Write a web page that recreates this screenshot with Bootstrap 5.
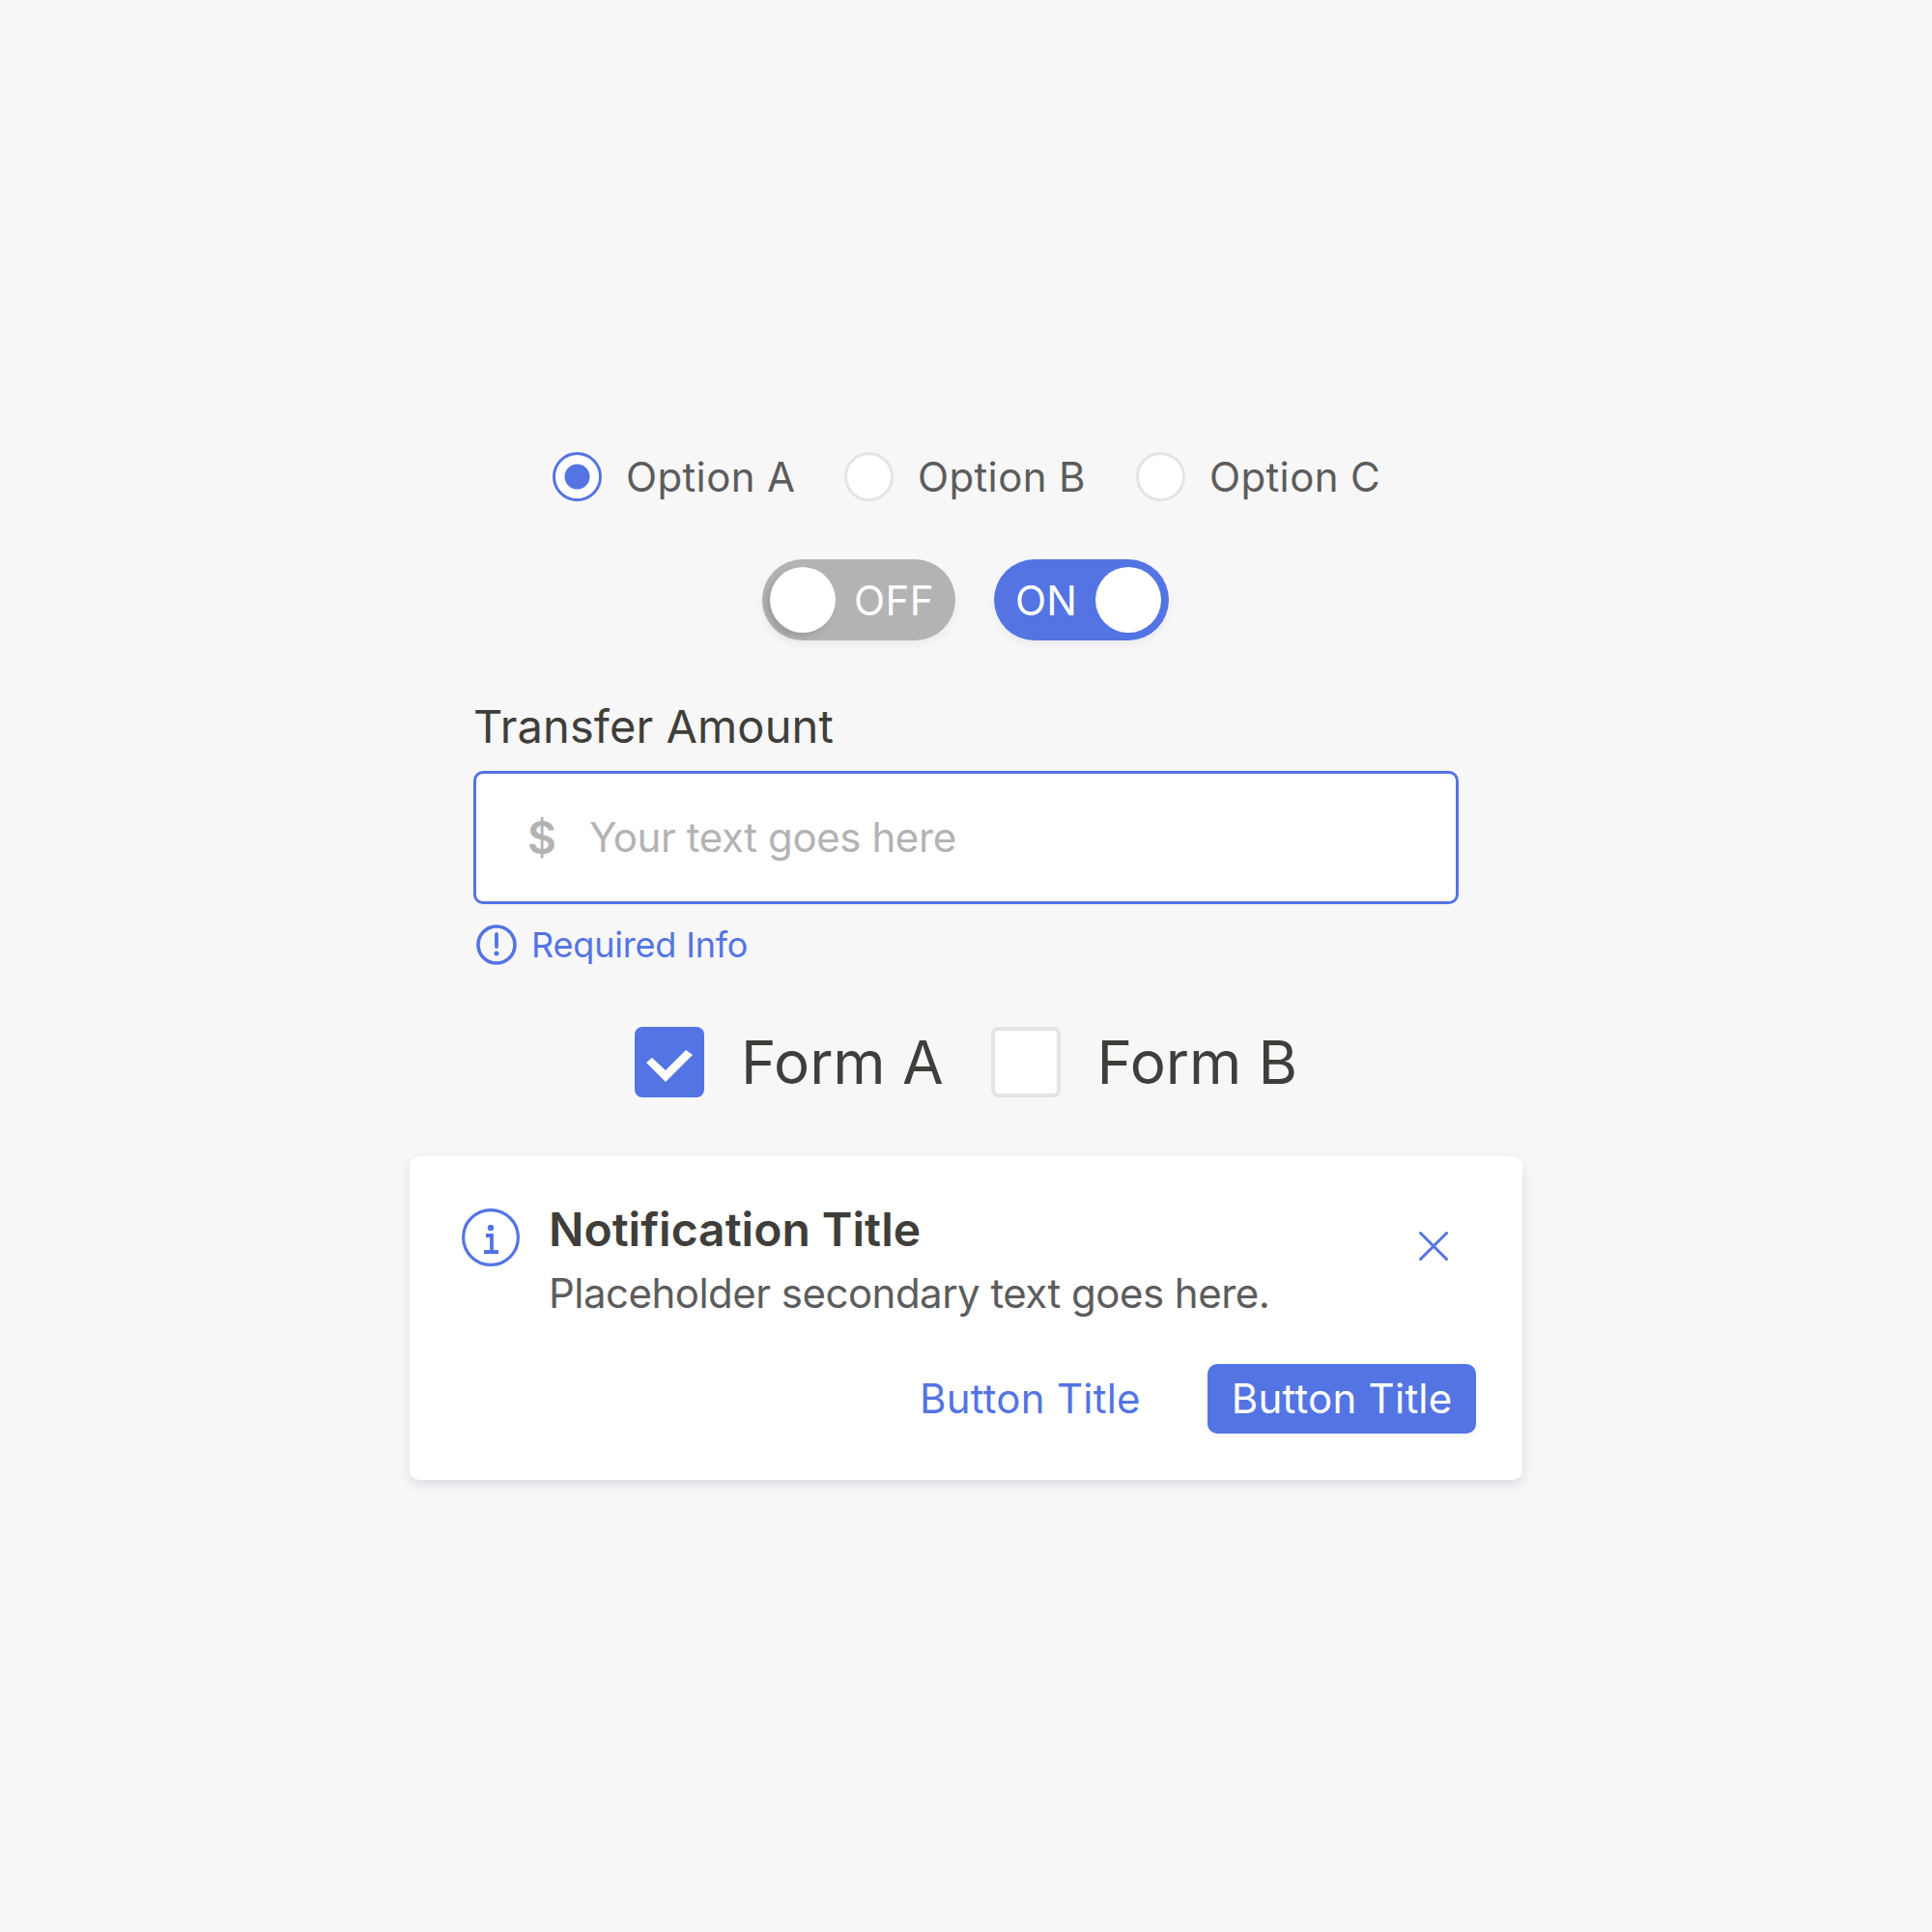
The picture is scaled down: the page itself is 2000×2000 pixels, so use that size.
<!doctype html>
<html lang="en">
<head>
<meta charset="utf-8">
<title>Form controls</title>
<link href="https://cdn.jsdelivr.net/npm/bootstrap@5.3.0/dist/css/bootstrap.min.css" rel="stylesheet">
<style>
:root{--blu:#5474e4;--ink:#403e3a;--sec:#5c5c5c;--mute:#b3b3b3;--line:#e3e4e8}
body{background:#f7f7f8;font-family:Inter,"Liberation Sans",sans-serif;color:var(--ink)}
.stage{width:1152px;min-height:100vh}
.radio-row{gap:50px;height:51px;margin-bottom:60px}
.form-check-input.pick{width:51px;height:51px;margin:0;background:#fff;border:3px solid var(--line);box-shadow:none}
.form-check-input.pick:checked{border-color:var(--blu);background:radial-gradient(circle,var(--blu) 0 12.5px,#fff 13.5px)}
.radio-lbl{font-size:42px;color:var(--sec);margin-left:25px;width:176px;white-space:nowrap;line-height:51px;letter-spacing:.35px}
.switch-row{gap:40px;margin-bottom:61px;margin-right:1px}
.sw{height:84px;border-radius:42px;box-shadow:0 5px 9px rgba(0,0,0,.05);color:#fff;font-size:42px;padding:8px}
.sw-off{width:200px;background:#b3b3b3}
.sw-on{width:181px;background:var(--blu)}
.knob{width:68px;height:68px;border-radius:50%;background:#fff;flex:none}
.sw-off .knob{box-shadow:-4px 4px 7px rgba(0,0,0,.14)}
.off-txt{padding-right:14px;letter-spacing:.4px}
.on-txt{padding-left:14px;letter-spacing:.2px}
.field{width:1020px}
.fld-label{font-size:47px;line-height:56px;margin-bottom:18px;letter-spacing:.1px}
.fld-box{height:138px;border:3px solid var(--blu);border-radius:10px;background:#fff;padding:0 53px;gap:34px}
.fld-box .form-control{border:0;padding:0 0 2px;font-size:42px;background:transparent;box-shadow:none;color:var(--ink);letter-spacing:-.4px}
.fld-box .form-control::placeholder{color:var(--mute);opacity:1}
.dollar{font-size:46px;font-weight:600;color:var(--mute);line-height:1}
.req{color:var(--blu);font-size:36px;margin-top:21px;gap:15px;padding-left:3px;height:42px;letter-spacing:-.18px}
.forms{margin-top:64px;margin-bottom:61px;font-size:62px;letter-spacing:-.1px}
.box{width:72px;height:73px;border-radius:8px;flex:none}
.box-on{background:var(--blu)}
.box-off{background:#fff;border:4px solid var(--line)}
.form-lbl{margin-left:38px;line-height:73px}
.form-gap{margin-right:49px}
.note{width:1152px;height:335px;border:0;border-radius:10px;background:#fff;box-shadow:0 5px 12px rgba(40,50,80,.12);padding:54px 48px 48px 54px}
.note-body{margin-left:30px;margin-top:-6px}
.note-title{font-size:48px;font-weight:600;line-height:56px}
.note-sub{font-size:42px;color:var(--sec);line-height:52px;margin-top:12px;letter-spacing:-.52px}
.note-x{margin:24px 29px 0 0}
.btn.act{font-size:42px;height:72px;padding:0 24.500px;border-radius:10px;border:0;line-height:72px;letter-spacing:.24px}
.btn.act-ghost{color:var(--blu);background:transparent;margin-right:45px}
.btn.act-fill{color:#fff;background:var(--blu);box-shadow:0 4px 6px rgba(0,0,0,.05)}
</style>
</head>
<body>
<main class="stage mx-auto d-flex flex-column align-items-center justify-content-center">
  <div class="radio-row d-flex align-items-center">
    <label class="d-flex align-items-center"><input class="form-check-input pick" type="radio" name="opt" checked><span class="radio-lbl">Option A</span></label>
    <label class="d-flex align-items-center"><input class="form-check-input pick" type="radio" name="opt"><span class="radio-lbl">Option B</span></label>
    <label class="d-flex align-items-center"><input class="form-check-input pick" type="radio" name="opt"><span class="radio-lbl">Option C</span></label>
  </div>
  <div class="switch-row d-flex">
    <div class="sw sw-off d-flex align-items-center justify-content-between"><span class="knob"></span><span class="off-txt">OFF</span></div>
    <div class="sw sw-on d-flex align-items-center justify-content-between"><span class="on-txt">ON</span><span class="knob"></span></div>
  </div>
  <div class="field">
    <div class="fld-label">Transfer Amount</div>
    <div class="fld-box d-flex align-items-center">
      <span class="dollar">$</span>
      <input class="form-control" type="text" placeholder="Your text goes here">
    </div>
    <div class="req d-flex align-items-center">
      <svg width="42" height="42" viewBox="0 0 42 42" fill="none" stroke="#5474e4" stroke-width="3.6"><circle cx="21" cy="21" r="19"/><path d="M21 10v13" stroke-linecap="round" stroke-width="3.8"/><circle cx="21" cy="30" r="2.5" fill="#5474e4" stroke="none"/></svg>
      <span>Required Info</span>
    </div>
  </div>
  <div class="forms d-flex align-items-center">
    <span class="box box-on d-flex"><svg width="72" height="73" viewBox="0 0 72 73"><polygon fill="#fff" points="12,37 18,32 32,45 53,24 60,29 32,57"/></svg></span>
    <span class="form-lbl form-gap">Form A</span>
    <span class="box box-off"></span>
    <span class="form-lbl">Form B</span>
  </div>
  <section class="card note">
    <div class="d-flex">
      <svg class="flex-none" width="60" height="60" viewBox="0 0 60 60" fill="none" stroke="#5474e4" stroke-width="3.2"><circle cx="30" cy="30" r="28.400"/><circle cx="30" cy="20" r="3.200" fill="#5474e4" stroke="none"/><path d="M25 28h6v16M23 45h15" stroke-width="3.8"/></svg>
      <div class="flex-grow-1 note-body">
        <div class="note-title">Notification Title</div>
        <div class="note-sub">Placeholder secondary text goes here.</div>
      </div>
      <svg class="note-x" width="30" height="30" viewBox="0 0 30 30" stroke="#5474e4" stroke-width="3" stroke-linecap="round"><path d="M1.5 1.5l27 27M28.500 1.500l-27 27"/></svg>
    </div>
    <div class="d-flex justify-content-end mt-auto">
      <button class="btn act act-ghost" type="button">Button Title</button>
      <button class="btn act act-fill" type="button">Button Title</button>
    </div>
  </section>
</main>
<script src="https://cdn.jsdelivr.net/npm/bootstrap@5.3.0/dist/js/bootstrap.bundle.min.js"></script>
</body>
</html>
